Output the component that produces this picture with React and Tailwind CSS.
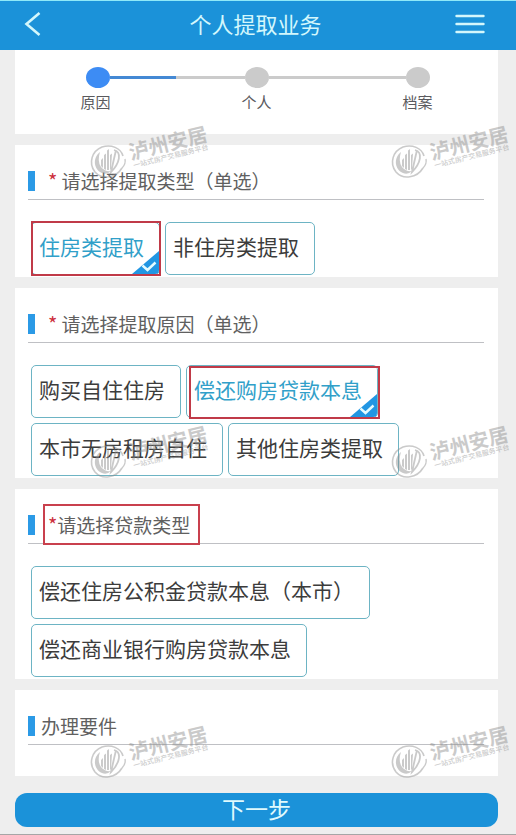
import { useState } from "react";
import clsx from "clsx";

const steps = ["原因", "个人", "档案"];

const withdrawTypes = [
  { label: "住房类提取", mark: "-left-px -right-0.5 -top-0.5 -bottom-0.5" },
  { label: "非住房类提取" },
];

const withdrawReasons = [
  { label: "购买自住住房" },
  { label: "偿还购房贷款本息", mark: "left-0.5 -right-[3px] top-0 -bottom-0.5" },
  { label: "本市无房租房自住" },
  { label: "其他住房类提取" },
];

const loanTypes = [
  { label: "偿还住房公积金贷款本息（本市）" },
  { label: "偿还商业银行购房贷款本息" },
];

function Header() {
  return (
    <header className="flex h-[50px] items-center justify-between border-t border-[#8fe9f8] bg-[#1b92d9] pr-[31px] pb-1 pl-6 text-[#d3f7fc]">
      <button aria-label="返回" className="w-8">
        <svg viewBox="0 0 18 24" className="h-6 w-[18px]" fill="none" stroke="currentColor" strokeWidth="2.6">
          <path d="M15.500 1 2.500 12l13 11" />
        </svg>
      </button>
      <h1 className="pb-0.5 text-[22px] leading-8">个人提取业务</h1>
      <button aria-label="菜单">
        <svg viewBox="0 0 30 20" className="h-5 w-[30px]" fill="none" stroke="currentColor" strokeWidth="2.4" strokeLinecap="round">
          <path d="M1.500 2h27M1.500 10h27M1.500 18h27" />
        </svg>
      </button>
    </header>
  );
}

function Steps({ current }) {
  return (
    <ol className="grid h-[84px] grid-cols-3 bg-white pt-[17px]">
      {steps.map((step, i) => (
        <li key={step} className="text-center">
          <div className="flex items-center pl-1">
            <span className={clsx("h-[3px] flex-1", i > 0 && "-ml-1 bg-[#cbcbcb]")} />
            <span className={clsx("h-[21px] w-6 rounded-[50%]", i === current ? "bg-[#3d8cf4]" : "bg-[#cbcbcb]")} />
            <span className={clsx("h-[3px] flex-1", i < steps.length - 1 && (i === current ? "bg-[#4489d4]" : "bg-[#cbcbcb]"))} />
          </div>
          <span className="block pt-1 text-[15px] leading-5 text-[#5a5a5e]">{step}</span>
        </li>
      ))}
    </ol>
  );
}

function SectionTitle({ children, className }) {
  return (
    <div className="mr-[14px] ml-[13px] flex items-center border-b border-[#bfc0c4] pb-2">
      <span className="h-5 w-[7px] bg-[#2b9ae6]" />
      <h2 className={clsx("relative text-[19px] leading-5 text-[#606060]", className)}>{children}</h2>
    </div>
  );
}

function Star() {
  return <span className="text-[20px] leading-5 text-[#cc2f3c]">*</span>;
}

function Options({ name, items, value, onChange }) {
  return (
    <div role="radiogroup" className="flex flex-wrap gap-[5px] pt-[22px] pb-0.5 pl-4">
      {items.map(({ label, mark }) => {
        const checked = value === label;
        return (
          <label
            key={label}
            className={clsx(
              "relative flex h-[53px] cursor-pointer items-center rounded-[5px] border border-[#6db4c4] pr-[15px] pb-1 pl-[7px] text-[21px]",
              checked ? "text-[#319fc9]" : "text-[#3c3c3c]"
            )}
          >
            <input
              type="radio"
              name={name}
              checked={checked}
              onChange={() => onChange(label)}
              className="sr-only"
            />
            {label}
            {checked && (
              <svg viewBox="0 0 27 23" className="absolute right-0 bottom-0 h-[23px] w-[27px]">
                <path d="M27 0v19q0 4-4 4H0z" fill="#2196e3" />
                <path d="m10.500 14.500 5 4.500 8-7.500" fill="none" stroke="#e4fbff" strokeWidth="2.400" />
              </svg>
            )}
            {checked && mark && <span className={clsx("absolute border-2 border-[#c03a48]", mark)} />}
          </label>
        );
      })}
    </div>
  );
}

function Watermark() {
  return (
    <svg viewBox="0 0 122 56" className="h-14 w-[122px] overflow-visible" fill="#8c8c8c">
      <g transform="translate(0 2)">
        <g fill="none" stroke="#8c8c8c">
          <path d="M31 43C25 53 11 55 4 47C-3 38 1 26 11 22C20 19 30 23 32 31" strokeWidth="1.600" />
          <path d="M23 25C31 27 29 38 20 47L25 25" strokeWidth="1.800" />
          <path d="M34 34Q35 39 31 43" strokeWidth="1.400" />
        </g>
        <path d="M9 27C1 33 3 45 11 48Q16 50 20 46Q14 47 10 42Q6 36 9 27z" />
        <path d="m10 35 2-2v10l-2-2zM13 30l2-1.500V45l-2-1zM16 25.500l2-1.500v21h-2zM19 30l2-1.500L20 44l-1 1z" />
      </g>
      <text transform="translate(40 37) rotate(-14)" fontSize="20" fontWeight="700">泸州安居</text>
      <text transform="translate(43 45) rotate(-14)" fontSize="7" fontWeight="500">一站式房产交易服务平台</text>
    </svg>
  );
}

function Watermarks() {
  return (
    <div aria-hidden="true" className="pointer-events-none absolute inset-x-0 top-[123px] grid grid-cols-[301px_122px] gap-y-[244px] pl-[91px] opacity-45">
      {[0, 1, 2, 3, 4, 5].map((n) => (
        <Watermark key={n} />
      ))}
    </div>
  );
}

export default function App() {
  const [type, setType] = useState("住房类提取");
  const [reason, setReason] = useState("偿还购房贷款本息");
  const [loan, setLoan] = useState("");

  return (
    <div className="relative min-h-screen overflow-hidden border-b border-[#a6a6a6] bg-[#eeeeee] font-['Noto_Sans_CJK_SC',sans-serif]">
      <Header />
      <main className="flex flex-col gap-[11px] pr-[18px] pb-[7px] pl-[15px]">
        <Steps current={0} />

        <section className="bg-white pt-[26px]">
          <SectionTitle className="pl-[13px]"><Star /> 请选择提取类型（单选）</SectionTitle>
          <Options name="type" items={withdrawTypes} value={type} onChange={setType} />
        </section>

        <section className="bg-white pt-[26px]">
          <SectionTitle className="pl-[13px]"><Star /> 请选择提取原因（单选）</SectionTitle>
          <Options name="reason" items={withdrawReasons} value={reason} onChange={setReason} />
        </section>

        <section className="bg-white pt-[26px]">
          <SectionTitle className="pl-[13px]">
            <Star />请选择贷款类型
            <span className="absolute -top-[11px] -right-2.5 -bottom-2.5 left-2 border-2 border-[#c9404d]" />
          </SectionTitle>
          <Options name="loan" items={loanTypes} value={loan} onChange={setLoan} />
        </section>

        <section className="bg-white pt-[26px] pb-[31px]">
          <SectionTitle className="pl-1.5">办理要件</SectionTitle>
        </section>

        <button className="mt-1.5 h-[34px] rounded-xl bg-[#1b92d9] pb-1 text-[23px] leading-[30px] text-[#e0fafd]">下一步</button>
      </main>
      <Watermarks />
    </div>
  );
}
